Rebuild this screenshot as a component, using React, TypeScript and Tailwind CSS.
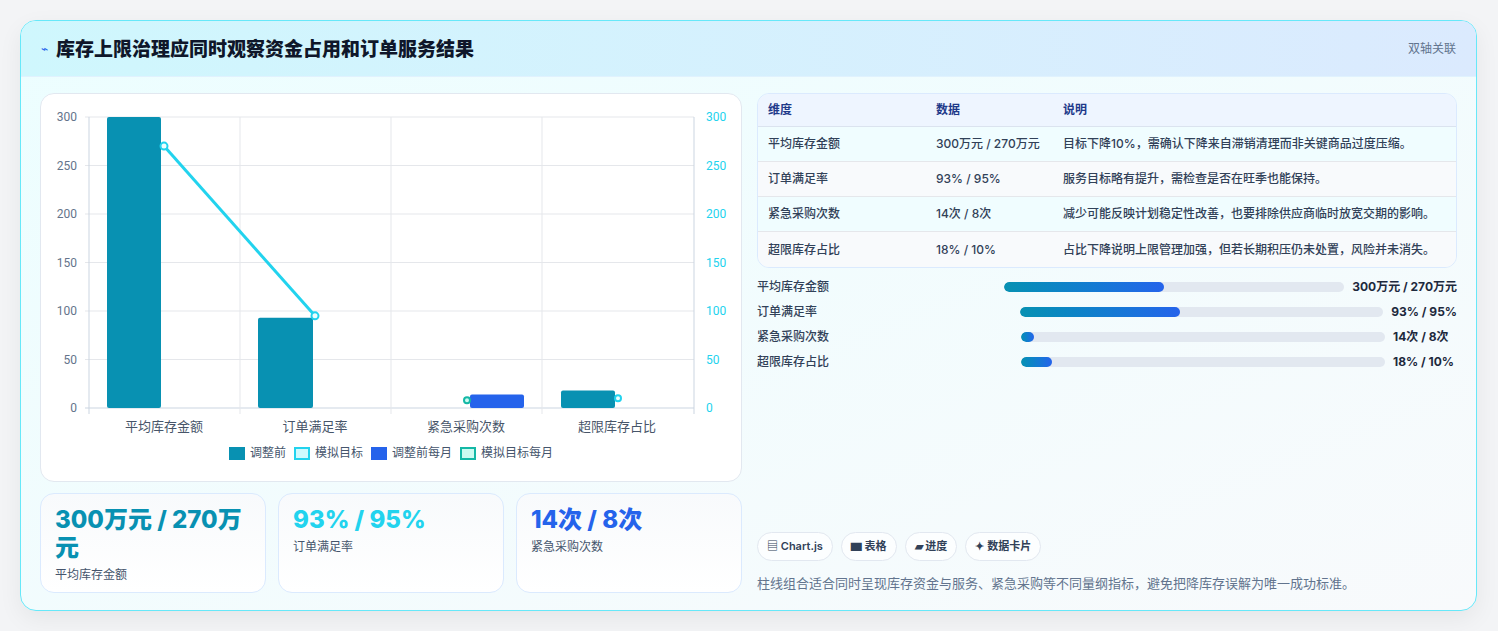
import React from "react";

const rows = [
  { k: "平均库存金额", v: "300万元 / 270万元", d: "目标下降10%，需确认下降来自滞销清理而非关键商品过度压缩。", p: 47 },
  { k: "订单满足率", v: "93% / 95%", d: "服务目标略有提升，需检查是否在旺季也能保持。", p: 44 },
  { k: "紧急采购次数", v: "14次 / 8次", d: "减少可能反映计划稳定性改善，也要排除供应商临时放宽交期的影响。", p: 3.5 },
  { k: "超限库存占比", v: "18% / 10%", d: "占比下降说明上限管理加强，但若长期积压仍未处置，风险并未消失。", p: 8.5 },
];

function Chart() {
  const y = (v: number) => 314 - v * 0.97;
  const ticks = [0, 50, 100, 150, 200, 250, 300];
  const cats = ["平均库存金额", "订单满足率", "紧急采购次数", "超限库存占比"];
  return (
    <svg width="700" height="388" className="absolute left-0 top-0" style={{ fontFamily: "Roboto, 'Noto Sans CJK SC', sans-serif" }}>
      {ticks.map((t) => (
        <g key={t}>
          <line x1="44" x2="653" y1={y(t)} y2={y(t)} stroke={t === 0 ? "#cbd5e1" : "#e5e7eb"} />
          <text x="36" y={y(t) + 4} textAnchor="end" fontSize="12" fill="#64748b">{t}</text>
          <text x="665" y={y(t) + 4} fontSize="12" fill="#22d3ee">{t}</text>
        </g>
      ))}
      {[48, 199, 350, 501, 653].map((x) => (
        <line key={x} x1={x} x2={x} y1="23" y2="320" stroke={x === 48 || x === 653 ? "#cbd5e1" : "#e5e7eb"} />
      ))}
      {cats.map((c, i) => (
        <text key={c} x={48 + 151 * i + 75} y="337" textAnchor="middle" fontSize="13" fill="#475569">{c}</text>
      ))}
      <rect x="66" y={y(300)} width="54" height={300 * 0.97} rx="2" fill="#0891b2" />
      <rect x="217" y={y(93)} width="55" height={93 * 0.97} rx="2" fill="#0891b2" />
      <rect x="429" y={y(14)} width="54" height={14 * 0.97} rx="2" fill="#2563eb" />
      <rect x="520" y={y(18)} width="54" height={18 * 0.97} rx="2" fill="#0891b2" />
      <polyline points={`123,${y(270)} 274,${y(95)}`} fill="none" stroke="#22d3ee" strokeWidth="3" />
      <circle cx="123" cy={y(270)} r="3.5" fill="#ecfeff" stroke="#22d3ee" strokeWidth="2" />
      <circle cx="274" cy={y(95)} r="3.5" fill="#ecfeff" stroke="#22d3ee" strokeWidth="2" />
      <circle cx="426" cy={y(8)} r="3" fill="#ccfbf1" stroke="#14b8a6" strokeWidth="2" />
      <circle cx="577" cy={y(10)} r="3" fill="#ecfeff" stroke="#22d3ee" strokeWidth="2" />
    </svg>
  );
}

function Legend() {
  const items = [
    { l: "调整前", c: "bg-[#0891b2] border-[#0891b2]" },
    { l: "模拟目标", c: "bg-[#cffafe] border-[#22d3ee]" },
    { l: "调整前每月", c: "bg-[#2563eb] border-[#2563eb]" },
    { l: "模拟目标每月", c: "bg-[#ccfbf1] border-[#14b8a6]" },
  ];
  return (
    <div className="absolute left-0 right-0 top-[350px] flex justify-center gap-[8px] text-[12px] text-slate-600">
      {items.map((i) => (
        <div key={i.l} className="flex items-center gap-[5px]">
          <span className={`w-[16px] h-[13px] border-2 ${i.c}`} />
          {i.l}
        </div>
      ))}
    </div>
  );
}

export default function App() {
  return (
    <div className="w-[1498px] h-[631px] bg-[#f3f4f6] p-[20px] pr-[21px]" style={{ fontFamily: "Inter, 'Noto Sans CJK SC', sans-serif" }}>
      <div className="h-[591px] rounded-[16px] border border-[#67e8f9] bg-gradient-to-br from-[#ecfeff] to-[#f8fafc] overflow-hidden shadow-[0_8px_24px_rgba(0,0,0,0.06)]">
        <div className="h-[56px] flex items-center justify-between px-[20px] bg-gradient-to-r from-[#cff7fd] to-[#dbeafe] border-b border-[#e0f2fe]">
          <div className="flex items-center gap-[8px]">
            <span className="text-[#2563eb] text-[12px]">⌁</span>
            <h1 className="text-[19px] font-black text-[#0f172a]" style={{ fontFamily: "'Noto Sans CJK SC', sans-serif" }}>库存上限治理应同时观察资金占用和订单服务结果</h1>
          </div>
          <span className="text-[12px] text-slate-500">双轴关联</span>
        </div>
        <div className="flex gap-[15px] px-[19px] pt-[16px]">
          <div className="w-[702px] flex flex-col gap-[11px]">
            <div className="relative h-[389px] bg-white rounded-[14px] border border-[#e2e8f0]">
              <Chart />
              <Legend />
            </div>
            <div className="grid grid-cols-3 gap-[12px]">
              {[
                { v: "300万元 / 270万元", l: "平均库存金额", c: "text-[#0891b2]" },
                { v: "93% / 95%", l: "订单满足率", c: "text-[#22d3ee]" },
                { v: "14次 / 8次", l: "紧急采购次数", c: "text-[#2563eb]" },
              ].map((s) => (
                <div key={s.l} className="h-[100px] rounded-[14px] border border-[#dbeafe] bg-gradient-to-b from-[#f8fafc] to-white px-[14px] pt-[12px]">
                  <div className={`text-[24px] leading-[28px] font-extrabold ${s.c}`}>{s.v}</div>
                  <div className="text-[12px] text-slate-600 mt-[4px]">{s.l}</div>
                </div>
              ))}
            </div>
          </div>
          <div className="flex-1 flex flex-col">
            <div className="rounded-[12px] border border-[#dbeafe] overflow-hidden text-[12px]">
              <div className="grid grid-cols-[168px_127px_1fr] h-[33px] items-center px-[10px] bg-[#eef5ff] border-b border-[#dbe3ef] font-semibold text-[#1e3a8a]">
                <span>维度</span><span>数据</span><span>说明</span>
              </div>
              {rows.map((r, i) => (
                <div key={r.k} className={`grid grid-cols-[168px_127px_1fr] h-[35px] items-center px-[10px] text-slate-700 font-medium ${i < 3 ? "border-b border-[#e5e7eb]" : ""} ${i % 2 === 0 ? "bg-[#f0fdff]" : "bg-[#f8fafc]"}`}>
                  <span>{r.k}</span><span>{r.v}</span><span>{r.d}</span>
                </div>
              ))}
            </div>
            <div className="flex flex-col gap-[9px] mt-[11px]">
              {rows.map((r) => (
                <div key={r.k} className="flex items-center gap-[8px] h-[16px] text-[12px]">
                  <span className="flex-[1] font-medium text-slate-700">{r.k}</span>
                  <div className="flex-[1.42] h-[10px] rounded-full bg-[#e2e8f0] overflow-hidden">
                    <div className="h-full rounded-full bg-gradient-to-r from-[#0891b2] to-[#2563eb]" style={{ width: `${Math.max(r.p, 3.5)}%` }} />
                  </div>
                  <span className="min-w-[64px] font-bold text-slate-800 whitespace-nowrap">{r.v}</span>
                </div>
              ))}
            </div>
            <div className="mt-auto flex gap-[8px] pb-[8px]">
              {["▤ Chart.js", "▆ 表格", "▰ 进度", "✦ 数据卡片"].map((b) => (
                <span key={b} className="h-[29px] px-[9px] flex items-center rounded-full border border-[#e2e8f0] bg-white/70 text-[11px] font-semibold text-slate-700">{b}</span>
              ))}
            </div>
            <p className="text-[13px] text-slate-500 mt-[5px]">柱线组合适合同时呈现库存资金与服务、紧急采购等不同量纲指标，避免把降库存误解为唯一成功标准。</p>
          </div>
        </div>
      </div>
    </div>
  );
}
